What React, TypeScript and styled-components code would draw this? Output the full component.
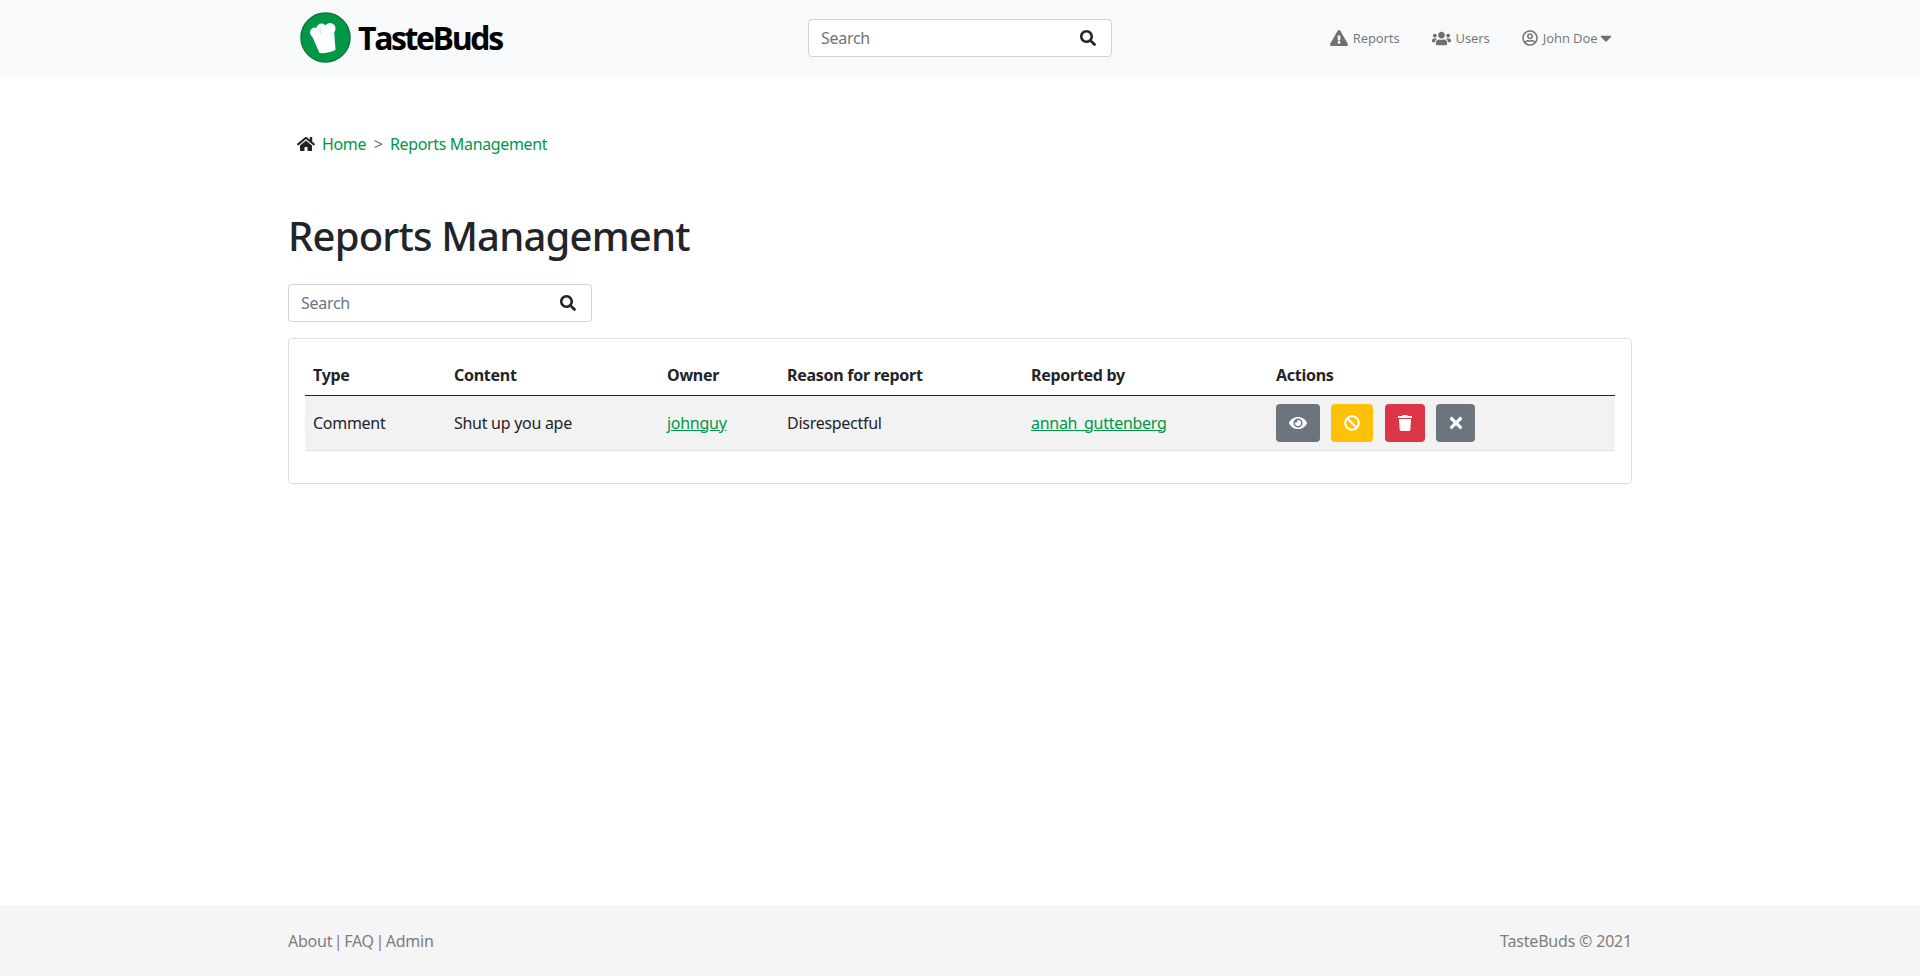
import React from "react";
import styled, { createGlobalStyle } from "styled-components";
import { FaExclamationTriangle, FaUsers, FaRegUserCircle, FaCaretDown, FaHome, FaSearch, FaEye, FaBan, FaTrash, FaTimes } from "react-icons/fa";

const Global = createGlobalStyle`
  html, body { margin: 0; padding: 0; background: #fff; }
  body { font-family: "Noto Sans", "Open Sans", sans-serif; font-size: 16px; color: #212529; letter-spacing: -0.28px; }
`;
const Page = styled.div`
  min-height: 976px; display: flex; flex-direction: column;
`;
const Navbar = styled.nav`
  height: 76px; background: #f8f9fa; display: flex; justify-content: center; flex-shrink: 0;
`;
const NavInner = styled.div`
  width: 1344px; display: grid; grid-template-columns: 1fr 304px 1fr; align-items: center;
`;
const Brand = styled.a`
  display: flex; align-items: center; gap: 6px; margin-left: 12px;
`;
const BrandText = styled.span`
  font-family: "Open Sans", sans-serif; font-weight: 700; font-size: 32px; color: #000; letter-spacing: -2.4px; line-height: 1;
`;
const SearchBox = styled.div`
  width: 304px; height: 38px; box-sizing: border-box; background: #fff; border: 1px solid #ced4da; border-radius: 4px;
  display: flex; align-items: center; justify-content: space-between; padding: 0 15px 0 12px;
  color: #212529; font-size: 16px;
  span { color: #6c757d; }
`;
const NavLinks = styled.div`
  display: flex; justify-content: flex-end; align-items: center; gap: 32px; padding-right: 19px;
`;
const NavLink = styled.a`
  display: flex; align-items: center; gap: 5px; color: rgba(0,0,0,.55); font-size: 13px; white-space: nowrap; letter-spacing: -0.1px;
`;
const CaretWrap = styled.span`
  display: flex; margin-left: -5.5px; margin-right: -2px;
`;
const Main = styled.main`
  width: 1344px; margin: 0 auto; flex: 1;
`;
const Crumbs = styled.div`
  display: flex; align-items: center; height: 24px; margin: 56px 0 0 9px; font-size: 16px; color: #6c757d; letter-spacing: -0.35px;
`;
const CrumbIcon = styled.span`
  display: flex; color: #212529; margin-right: 7px; font-size: 18px;
`;
const CrumbLink = styled.a`
  color: #009846;
`;
const CrumbSep = styled.span`
  margin: 0 7.5px;
`;
const Title = styled.h1`
  margin: 56px 0 0; font-size: 40px; font-weight: 500; line-height: 48px; color: #212529; letter-spacing: -0.8px;
`;
const ListSearch = styled.div`
  margin-top: 24px;
`;
const Card = styled.section`
  margin-top: 16px; border: 1px solid #dfdfdf; border-radius: 4px; padding: 16px 16px 32px; box-sizing: border-box;
`;
const Table = styled.table`
  width: 1310px; border-collapse: collapse; table-layout: fixed; font-size: 16px;
`;
const Th = styled.th<{ $w: number }>`
  width: ${p => p.$w}px; text-align: left; font-weight: 700; padding: 8px; height: 40px; box-sizing: border-box;
  border-bottom: 1px solid #212529;
`;
const Td = styled.td`
  padding: 8px; height: 55px; box-sizing: border-box; background: #f2f2f2; border-bottom: 1px solid #dee2e6;
`;
const TableLink = styled.a`
  color: #009846; text-decoration: underline;
`;
const Actions = styled.div`
  display: flex; gap: 11.45px;
`;
const ActionBtn = styled.button<{ $bg: string; $w: number; $icon: number }>`
  width: ${p => p.$w}px; height: 38px; border: 0; border-radius: 4px; background: ${p => p.$bg}; color: #fff;
  display: flex; align-items: center; justify-content: center; padding: 0; font-size: ${p => p.$icon}px;
`;
const Footer = styled.footer`
  height: 71px; background: #f5f5f5; display: flex; justify-content: center; flex-shrink: 0;
`;
const FooterInner = styled.div`
  width: 1344px; display: flex; justify-content: space-between; align-items: center; color: #7d7d7d; font-size: 16px;
`;
const FooterLinks = styled.span`
  word-spacing: -2.2px; letter-spacing: -0.25px;
`;
const FooterCopy = styled.span`
  letter-spacing: -0.2px;
`;

const Logo = () => (
  <svg width="52" height="52" viewBox="0 0 52 52">
    <circle cx="25.5" cy="25.5" r="24.5" fill="#009846" stroke="#0b7a3c" strokeWidth="1.5" />
    <g fill="#fff">
      <circle cx="15" cy="20.5" r="5" />
      <circle cx="21.5" cy="16.5" r="5" />
      <circle cx="30" cy="16.5" r="5.5" />
      <path d="M12 24 L20 17 L34 18 L35.5 38 C31 40.5 24 41.5 19.5 41 Z" />
    </g>
    <path d="M20.5 15.5c-1 2-.8 4 .5 6" fill="none" stroke="#cfd8d3" strokeWidth="1" />
  </svg>
);

export default function App() {
  return (
    <Page>
      <Global />
      <Navbar>
        <NavInner>
          <Brand><Logo /><BrandText>TasteBuds</BrandText></Brand>
          <SearchBox><span>Search</span><FaSearch size={16} /></SearchBox>
          <NavLinks>
            <NavLink><FaExclamationTriangle size={18} />Reports</NavLink>
            <NavLink><FaUsers size={19} />Users</NavLink>
            <NavLink><FaRegUserCircle size={16} />John Doe<CaretWrap><FaCaretDown size={18} /></CaretWrap></NavLink>
          </NavLinks>
        </NavInner>
      </Navbar>
      <Main>
        <Crumbs>
          <CrumbIcon><FaHome /></CrumbIcon>
          <CrumbLink>Home</CrumbLink>
          <CrumbSep>&gt;</CrumbSep>
          <CrumbLink>Reports Management</CrumbLink>
        </Crumbs>
        <Title>Reports Management</Title>
        <ListSearch><SearchBox><span>Search</span><FaSearch size={16} /></SearchBox></ListSearch>
        <Card>
          <Table>
            <thead>
              <tr>
                <Th $w={141}>Type</Th>
                <Th $w={213}>Content</Th>
                <Th $w={120}>Owner</Th>
                <Th $w={244}>Reason for report</Th>
                <Th $w={245}>Reported by</Th>
                <Th $w={347}>Actions</Th>
              </tr>
            </thead>
            <tbody>
              <tr>
                <Td>Comment</Td>
                <Td>Shut up you ape</Td>
                <Td><TableLink>johnguy</TableLink></Td>
                <Td>Disrespectful</Td>
                <Td><TableLink>annah_guttenberg</TableLink></Td>
                <Td>
                  <Actions>
                    <ActionBtn $bg="#6c757d" $w={44} $icon={18}><FaEye /></ActionBtn>
                    <ActionBtn $bg="#ffc107" $w={42} $icon={16}><FaBan /></ActionBtn>
                    <ActionBtn $bg="#dc3545" $w={40} $icon={16}><FaTrash /></ActionBtn>
                    <ActionBtn $bg="#6c757d" $w={39} $icon={18}><FaTimes /></ActionBtn>
                  </Actions>
                </Td>
              </tr>
            </tbody>
          </Table>
        </Card>
      </Main>
      <Footer>
        <FooterInner>
          <FooterLinks>About | FAQ | Admin</FooterLinks>
          <FooterCopy>TasteBuds © 2021</FooterCopy>
        </FooterInner>
      </Footer>
    </Page>
  );
}
